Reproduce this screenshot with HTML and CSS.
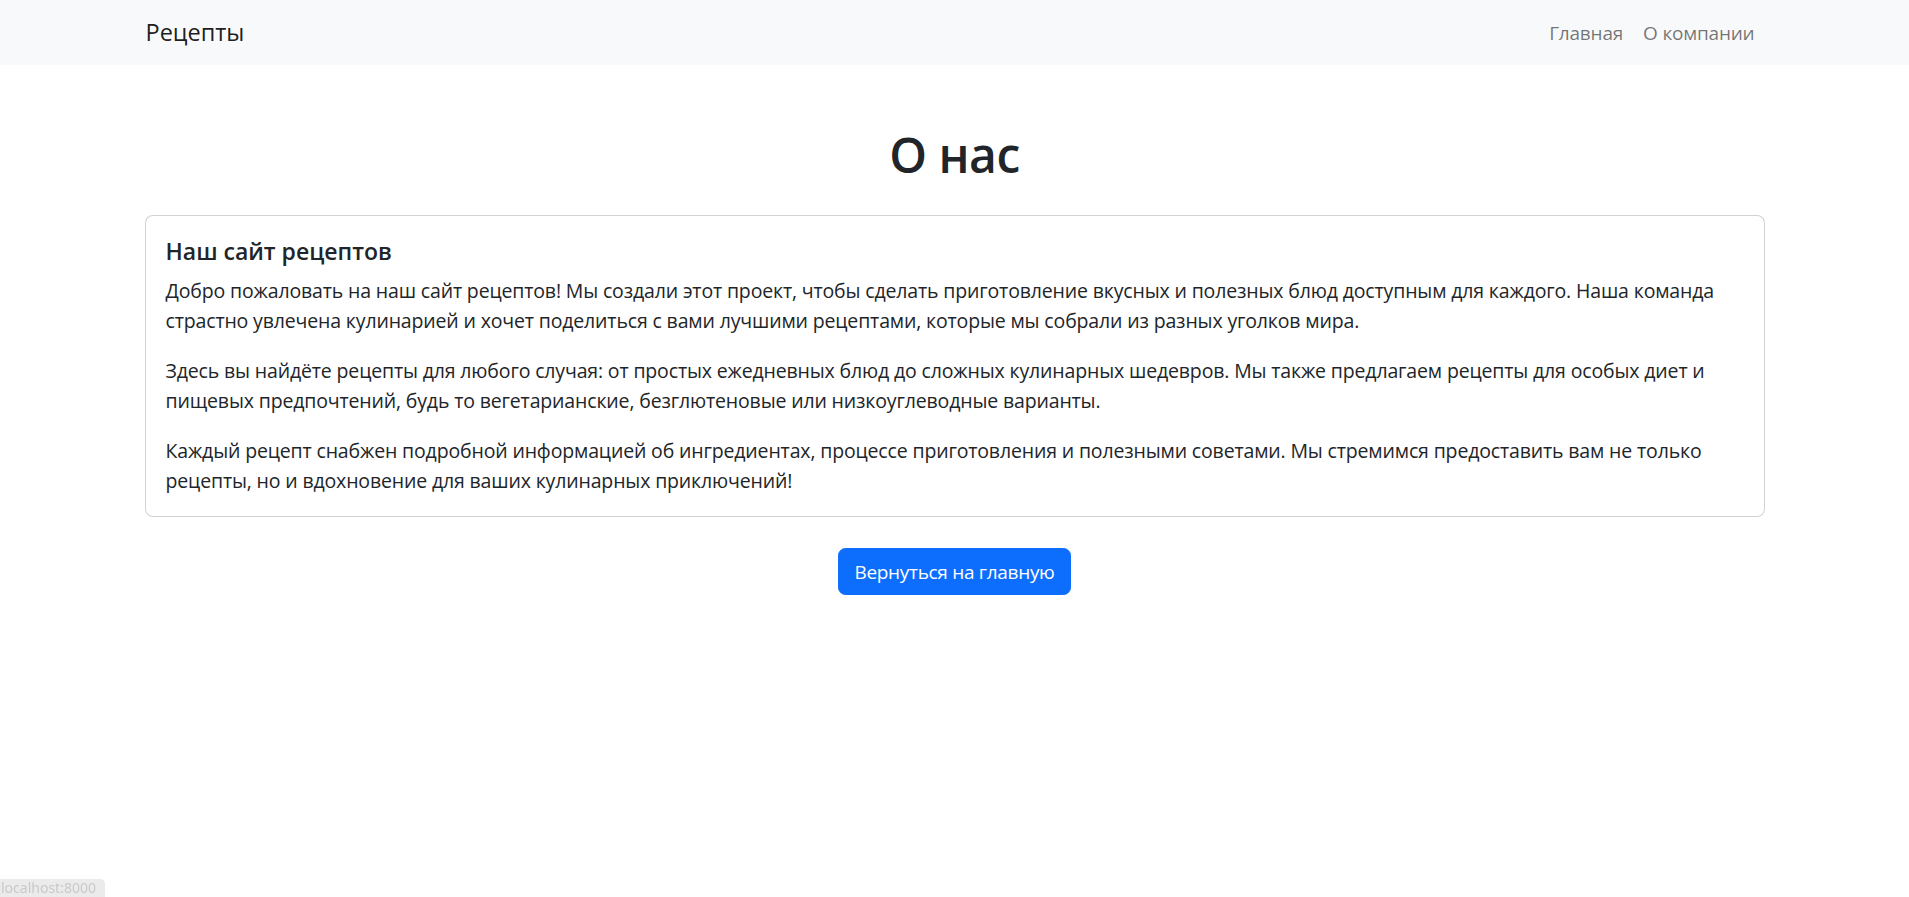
FILE: index.html
```html
<!DOCTYPE html>
<html lang="ru">
<head>
<meta charset="utf-8">
<title>О нас</title>
<link rel="stylesheet" href="styles.css">
</head>
<body>
<nav class="navbar">
  <div class="container nav-inner">
    <a class="brand" href="#">Рецепты</a>
    <ul class="nav-links">
      <li><a class="nav-link" href="#">Главная</a></li>
      <li><a class="nav-link" href="#">О компании</a></li>
    </ul>
  </div>
</nav>
<main class="container main">
  <h1 class="page-title">О нас</h1>
  <div class="card">
    <div class="card-body">
      <h5 class="card-title">Наш сайт рецептов</h5>
      <p class="card-text">Добро пожаловать на наш сайт рецептов! Мы создали этот проект, чтобы сделать приготовление вкусных и полезных блюд доступным для каждого. Наша команда страстно увлечена кулинарией и хочет поделиться с вами лучшими рецептами, которые мы собрали из разных уголков мира.</p>
      <p class="card-text">Здесь вы найдёте рецепты для любого случая: от простых ежедневных блюд до сложных кулинарных шедевров. Мы также предлагаем рецепты для особых диет и пищевых предпочтений, будь то вегетарианские, безглютеновые или низкоуглеводные варианты.</p>
      <p class="card-text last">Каждый рецепт снабжен подробной информацией об ингредиентах, процессе приготовления и полезными советами. Мы стремимся предоставить вам не только рецепты, но и вдохновение для ваших кулинарных приключений!</p>
    </div>
  </div>
  <div class="actions">
    <a class="btn-primary" href="#">Вернуться на главную</a>
  </div>
</main>
<div class="status-bar">localhost:8000</div>
</body>
</html>
```
FILE: styles.css
```css
* { box-sizing: border-box; }
html, body { margin: 0; padding: 0; }
body {
  font-family: "Open Sans", "Noto Sans", sans-serif;
  font-size: 20px;
  line-height: 30px;
  color: #212529;
  background: #fff;
}
a { text-decoration: none; }
.container {
  max-width: 1650px;
  margin: 0 auto;
  padding: 0 15px;
}
.navbar {
  background: #f8f9fa;
  height: 65px;
}
.nav-inner {
  height: 65px;
  display: flex;
  align-items: center;
  justify-content: space-between;
}
.brand {
  font-size: 23.5px;
  color: rgba(0, 0, 0, 0.9);
  line-height: 30px;
  padding-left: 1px;
  margin-top: -1px;
}
.nav-links {
  list-style: none;
  margin: 0;
  padding: 0;
  display: flex;
}
.nav-link {
  display: block;
  padding: 5px 10px;
  font-size: 19px;
  line-height: 30px;
  letter-spacing: -0.2px;
  color: rgba(0, 0, 0, 0.55);
}
.main {
  padding-top: 60px;
}
.page-title {
  margin: 0 0 30px;
  text-align: center;
  font-size: 48px;
  font-weight: 600;
  line-height: 60px;
  letter-spacing: -0.5px;
}
.card {
  border: 1px solid rgba(0, 0, 0, 0.175);
  border-radius: 8px;
  background: #fff;
}
.card-body {
  padding: 20px;
}
.card-title {
  margin: 0 0 10px;
  font-size: 23px;
  font-weight: 600;
  line-height: 30px;
}
.card-text {
  margin: 0 0 20px;
  font-size: 19.5px;
  letter-spacing: -0.15px;
}
.card-text.last { margin-bottom: 0; }
.actions {
  margin-top: 31px;
  display: flex;
  justify-content: center;
}
.btn-primary {
  display: inline-block;
  background: #0d6efd;
  border: 1px solid #0d6efd;
  color: #fff;
  border-radius: 7.5px;
  padding: 7.5px 15px;
  font-size: 19px;
  line-height: 30px;
  letter-spacing: -0.3px;
}
.status-bar {
  position: fixed;
  left: 0;
  bottom: 0;
  width: 105px;
  height: 18px;
  padding-left: 1px;
  background: #ebebeb;
  border-top-right-radius: 5px;
  color: #c9c9c9;
  font-size: 14px;
  line-height: 18px;
  white-space: nowrap;
  overflow: hidden;
  font-family: "Noto Sans", sans-serif;
}
```
